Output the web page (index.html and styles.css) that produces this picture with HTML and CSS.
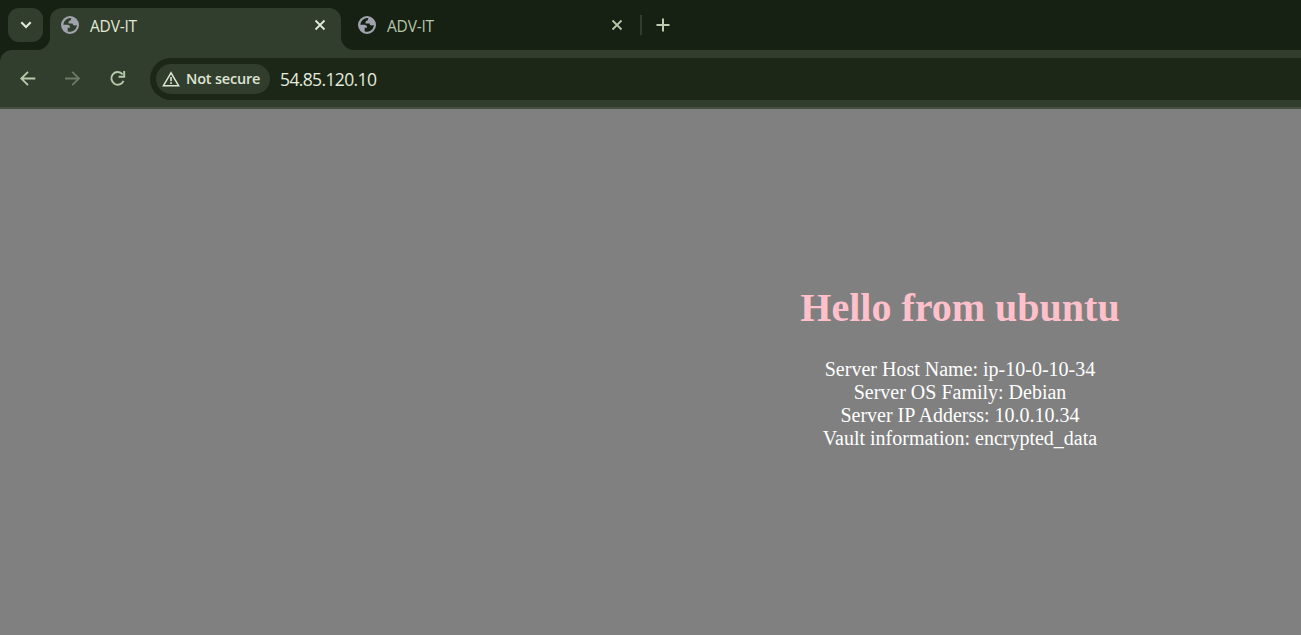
FILE: index.html
```html
<!DOCTYPE html>
<html lang="en">
<head>
<meta charset="utf-8">
<title>ADV-IT</title>
<link rel="stylesheet" href="styles.css">
</head>
<body>
<svg class="defs" width="0" height="0">
  <symbol id="globe" viewBox="0 0 18 18"><path fill-rule="evenodd" fill="#a0a3ad" d="M9 0a9 9 0 1 1 0 18A9 9 0 0 1 9 0zM10.4 2.2A7 7 0 0 0 2.3 8.8h3.9c1.9 0 2.9 1 2.9 2.9H6.7v3.7A6.8 6.8 0 0 0 15.8 9.1c-.7.2-1.3.3-2 .3-1.5 0-2.2-.7-2.2-2H7.6c-.3-2.1.5-3 2-3 .2-1 .4-1.6.8-2.2z"/></symbol>
  <symbol id="close" viewBox="0 0 12 12"><path d="M1.5 1.5l9 9m0-9l-9 9" fill="none" stroke="currentColor" stroke-width="1.8"/></symbol>
</svg>
<header>
  <div class="strip">
    <button class="search"><svg width="12" height="8" viewBox="0 0 12 8"><path d="M1.3 1.3L6 6l4.7-4.7" fill="none" stroke="#e2ead8" stroke-width="2.1"/></svg></button>
    <div class="tab active">
      <svg class="globe"><use href="#globe"/></svg><span class="name">ADV-IT</span><svg class="close"><use href="#close"/></svg>
    </div>
    <div class="tab">
      <svg class="globe"><use href="#globe"/></svg><span class="name">ADV-IT</span><svg class="close"><use href="#close"/></svg>
    </div>
    <span class="divider"></span>
    <svg class="plus" width="14" height="14" viewBox="0 0 14 14"><path d="M7 .5v13M.5 7h13" stroke="#bccbb2" stroke-width="2"/></svg>
  </div>
  <div class="toolbar">
    <div class="nav">
      <svg width="16" height="16" viewBox="0 0 16 16"><path d="M15.3 7.5H1.7M8 .8L1.2 7.5 8 14.2" fill="none" stroke="#b6cbac" stroke-width="1.8"/></svg>
      <svg width="16" height="16" viewBox="0 0 16 16"><path d="M0 7.5h13.6M7.2.8L14 7.5l-6.8 6.7" fill="none" stroke="#6b7b66" stroke-width="1.8"/></svg>
      <svg width="16" height="16" viewBox="0 0 16 16"><path d="M12.6 3.4A6.3 6.3 0 1 0 13.5 9.8M14.2 0v5.7H8.6" fill="none" stroke="#b6cbac" stroke-width="1.9"/></svg>
    </div>
    <div class="address">
      <div class="chip">
        <svg width="18" height="16" viewBox="0 0 18 16"><path d="M9 1.8L1.4 14.7h15.2z" fill="none" stroke="#dee5d4" stroke-width="1.5"/><path d="M9 6v4.2M9 11.3v1.8" stroke="#dee5d4" stroke-width="1.6"/></svg>
        <span class="chip-text">Not secure</span>
      </div>
      <span class="url">54.85.120.10</span>
    </div>
  </div>
</header>
<main>
  <h1>Hello from ubuntu</h1>
  <p>Server Host Name: ip-10-0-10-34<br>Server OS Family: Debian<br>Server IP Adderss: 10.0.10.34<br>Vault information: encrypted_data</p>
</main>
</body>
</html>
```
FILE: styles.css
```css
* { box-sizing: border-box; }
html, body { margin: 0; height: 100%; overflow: hidden; }
body { background: #808080; font-family: "Liberation Serif", serif; }
svg { display: block; flex: none; }
.defs { position: absolute; }
header { height: 109px; background: #162013; font-family: "Open Sans", "Noto Sans", sans-serif; }
.strip { height: 50px; display: flex; align-items: center; padding-left: 8px; }
.search { width: 35px; height: 34px; border: 0; border-radius: 11px; background: #323e2d; display: flex; align-items: center; justify-content: center; padding: 0; margin-right: 7px; }
.tab { position: relative; width: 291px; height: 42px; margin-top: 8px; padding: 0 15px 8px 11px; display: flex; align-items: center; color: #b6c7aa; }
.tab + .tab { width: 290px; padding: 0 8px 8px 17px; }
.active { background: #323e2d; border-radius: 12px 12px 0 0; color: #e2ead8; }
.active::before, .active::after { content: ""; position: absolute; bottom: 0; width: 13px; height: 13px; }
.active::before { left: -13px; background: radial-gradient(circle at 0 0, transparent 12.5px, #323e2d 13.5px); }
.active::after { right: -13px; background: radial-gradient(circle at 100% 0, transparent 12.5px, #323e2d 13.5px); }
.globe { width: 18px; height: 18px; }
.name { flex: 1; margin-left: 11px; padding-top: 2px; font-size: 15.5px; line-height: 20px; letter-spacing: -.2px; }
.close { width: 12px; height: 12px; }
.divider { width: 2px; height: 20px; margin-left: 9px; background: #323e2d; }
.plus { margin-left: 14px; }
.toolbar { height: 59px; background: #323e2d; border-bottom: 2px solid #454f41; border-radius: 12px 0 0 0; display: flex; padding: 8px 0 0 20px; }
.nav { display: flex; gap: 29px; width: 130px; padding-top: 13px; }
.address { flex: 1; height: 42px; border-radius: 21px 0 0 21px; background: #1c2718; display: flex; align-items: center; padding-left: 6px; }
.chip { width: 114px; height: 30px; border-radius: 15px; background: #323e2d; display: flex; align-items: center; padding-left: 6px; }
.chip-text { margin-left: 6px; font-size: 14.5px; font-weight: 600; line-height: 20px; letter-spacing: -.2px; color: #dee5d4; white-space: nowrap; }
.url { margin-left: 10px; font-size: 17.5px; line-height: 22px; color: #e4ebdc; letter-spacing: -.63px; }
main { width: 682px; margin-left: 619px; padding-top: 176px; text-align: center; }
h1 { margin: 0; font-size: 40px; line-height: 46px; color: #ffc0cb; }
p { margin: 27px 0 0; font-size: 20px; line-height: 23px; color: #fff; }
```
